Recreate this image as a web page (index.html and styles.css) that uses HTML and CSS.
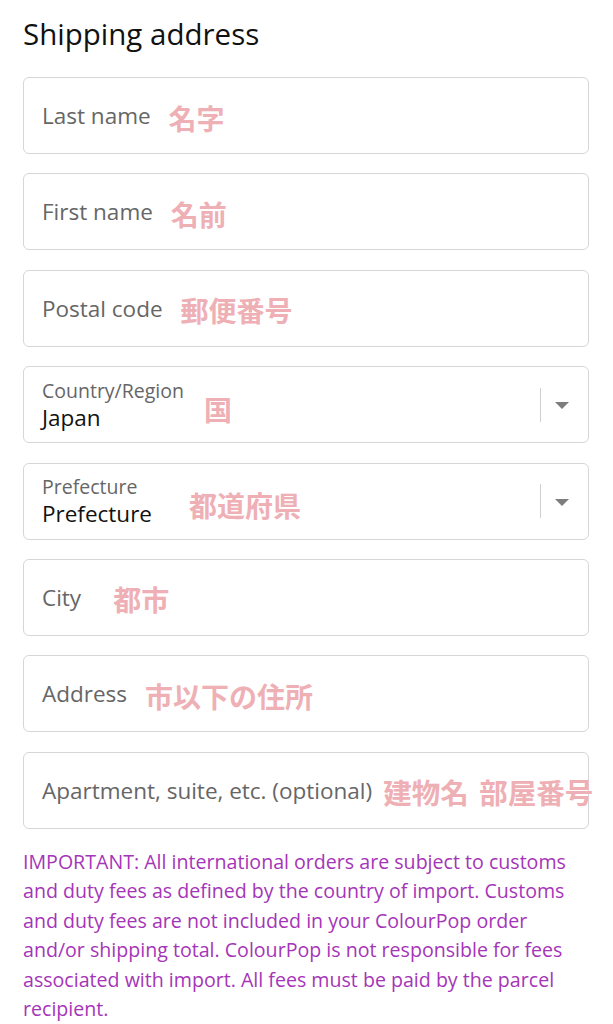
FILE: index.html
```html
<!DOCTYPE html>
<html lang="en">
<head>
<meta charset="utf-8">
<title>Shipping address</title>
<link rel="stylesheet" href="styles.css">
</head>
<body>
<main class="page">
  <h2 class="title">Shipping address</h2>
  <div class="fields">
    <div class="field"><span class="label">Last name</span><span class="note">名字</span></div>
    <div class="field"><span class="label">First name</span><span class="note">名前</span></div>
    <div class="field"><span class="label">Postal code</span><span class="note">郵便番号</span></div>
    <div class="field select">
      <div class="select-text">
        <span class="small-label">Country/Region</span>
        <span class="value">Japan</span>
      </div>
      <span class="note note-country">国</span>
      <span class="sep"></span>
      <svg class="caret" width="14" height="7" viewBox="0 0 14 7"><path d="M0 0H14L7 7Z" fill="#7d7d7d"/></svg>
    </div>
    <div class="field select">
      <div class="select-text">
        <span class="small-label">Prefecture</span>
        <span class="value">Prefecture</span>
      </div>
      <span class="note note-pref">都道府県</span>
      <span class="sep"></span>
      <svg class="caret" width="14" height="7" viewBox="0 0 14 7"><path d="M0 0H14L7 7Z" fill="#7d7d7d"/></svg>
    </div>
    <div class="field"><span class="label">City</span><span class="note note-city">都市</span></div>
    <div class="field"><span class="label">Address</span><span class="note">市以下の住所</span></div>
    <div class="field"><span class="label">Apartment, suite, etc. (optional)</span><span class="note note-apt">建物名 部屋番号</span></div>
  </div>
  <p class="notice">IMPORTANT: All international orders are subject to customs and duty fees as defined by the country of import. Customs and duty fees are not included in your ColourPop order and/or shipping total. ColourPop is not responsible for fees associated with import. All fees must be paid by the parcel recipient.</p>
</main>
</body>
</html>
```
FILE: styles.css
```css
html, body {
  margin: 0;
  padding: 0;
  background: #ffffff;
}
body {
  font-family: "Open Sans", "Noto Sans", "Noto Sans CJK JP", sans-serif;
  color: #1a1a1a;
}
.page {
  padding: 16px 24px 0 23px;
}
.title {
  margin: 0;
  font-size: 29.5px;
  line-height: 36px;
  font-weight: 400;
  color: #111;
}
.fields {
  margin-top: 25px;
  display: flex;
  flex-direction: column;
  gap: 19.4px;
}
.field {
  box-sizing: border-box;
  height: 77px;
  border: 1px solid #d6d6d6;
  border-radius: 6px;
  padding-left: 18px;
  display: flex;
  align-items: center;
  white-space: nowrap;
}
.label {
  font-size: 22.5px;
  color: #666;
}
.note {
  font-family: "Noto Sans CJK JP", sans-serif;
  font-weight: 700;
  font-size: 28px;
  line-height: 1;
  color: #eeb0b5;
  margin-left: 18px;
  margin-top: 4px;
}
.note-city { margin-left: 32px; }
.note-apt {
  margin-left: 11px;
  margin-right: -8px;
  font-size: 28.5px;
  word-spacing: 4px;
}
.select {
  padding-right: 19px;
}
.select-text {
  display: flex;
  flex-direction: column;
  margin-top: 1px;
}
.small-label {
  font-size: 19.5px;
  line-height: 25px;
  color: #666;
}
.value {
  font-size: 22.5px;
  line-height: 30px;
  color: #111;
}
.note-country { margin-left: 20px; margin-top: 8px; }
.note-pref { margin-left: 37px; margin-top: 8px; }
.sep {
  margin-left: auto;
  width: 1px;
  height: 34px;
  background: #cfcfcf;
}
.caret {
  margin-left: 14px;
  margin-top: 2px;
}
.notice {
  margin: 18px 0 0;
  font-size: 19.6px;
  line-height: 29.5px;
  color: #a535b8;
}
```
